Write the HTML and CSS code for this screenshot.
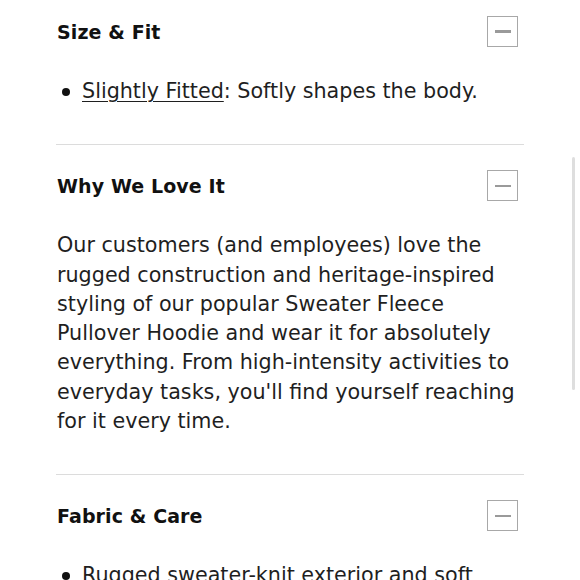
FILE: index.html
```html
<!DOCTYPE html>
<html lang="en">
<head>
<meta charset="utf-8">
<title>Product details</title>
<link rel="stylesheet" href="styles.css">
</head>
<body>
<div class="accordion">
  <section class="panel">
    <div class="panel-head">
      <h2 class="panel-title">Size &amp; Fit</h2>
      <button class="toggle" aria-label="Collapse"><span class="minus"></span></button>
    </div>
    <ul class="panel-list">
      <li><a class="fit-link" href="#">Slightly Fitted</a>: Softly shapes the body.</li>
    </ul>
  </section>
  <section class="panel">
    <div class="panel-head">
      <h2 class="panel-title">Why We Love It</h2>
      <button class="toggle" aria-label="Collapse"><span class="minus"></span></button>
    </div>
    <p class="panel-text">Our customers (and employees) love the rugged construction and heritage-inspired styling of our popular Sweater Fleece Pullover Hoodie and wear it for absolutely everything. From high-intensity activities to everyday tasks, you'll find yourself reaching for it every time.</p>
  </section>
  <section class="panel">
    <div class="panel-head">
      <h2 class="panel-title">Fabric &amp; Care</h2>
      <button class="toggle" aria-label="Collapse"><span class="minus"></span></button>
    </div>
    <ul class="panel-list">
      <li>Rugged sweater-knit exterior and soft brushed fleece interior.</li>
    </ul>
  </section>
</div>
<div class="scrollbar"></div>
</body>
</html>
```
FILE: styles.css
```css
html, body {
  margin: 0;
  padding: 0;
  background: #ffffff;
  overflow: hidden;
}

body {
  font-family: "DejaVu Sans", "Liberation Sans", sans-serif;
  color: #1f1f1f;
}

.accordion {
  width: 468px;
  margin-left: 56px;
}

.panel {
  border-top: 1.5px solid #dcdcdc;
}

.panel:first-child {
  border-top: none;
}

.panel-head {
  display: flex;
  align-items: center;
  justify-content: space-between;
  padding: 25px 6px 0 1px;
}

.panel:first-child .panel-head {
  padding-top: 16px;
}

.panel-title {
  margin: 0;
  font-size: 19px;
  font-weight: 700;
  color: #111111;
  letter-spacing: 0.1px;
}

.toggle {
  width: 31px;
  height: 31px;
  padding: 0;
  margin: 0;
  border: 1.5px solid #a8a8a8;
  background: #ffffff;
  display: flex;
  align-items: center;
  justify-content: center;
}

.minus {
  display: block;
  width: 16px;
  height: 2.5px;
  background: #9a9a9a;
}

.panel-list {
  list-style: none;
  margin: 30px 0 0;
  padding: 0 0 38px 26px;
  font-size: 20.7px;
  line-height: 29.3px;
}

.panel-list li {
  position: relative;
}

.panel-list li::before {
  content: "";
  position: absolute;
  left: -20px;
  top: 11px;
  width: 8px;
  height: 8px;
  border-radius: 50%;
  background: #111111;
}

.fit-link {
  color: #1f1f1f;
  text-decoration: underline;
  text-decoration-thickness: 1px;
  text-underline-offset: 3px;
}

.panel-text {
  margin: 30px 0 0;
  padding: 0 0 38px 1px;
  font-size: 20.7px;
  line-height: 29.3px;
}

.scrollbar {
  position: fixed;
  left: 572px;
  top: 157px;
  width: 3px;
  height: 233px;
  border-radius: 2px;
  background: #dedede;
}
```
